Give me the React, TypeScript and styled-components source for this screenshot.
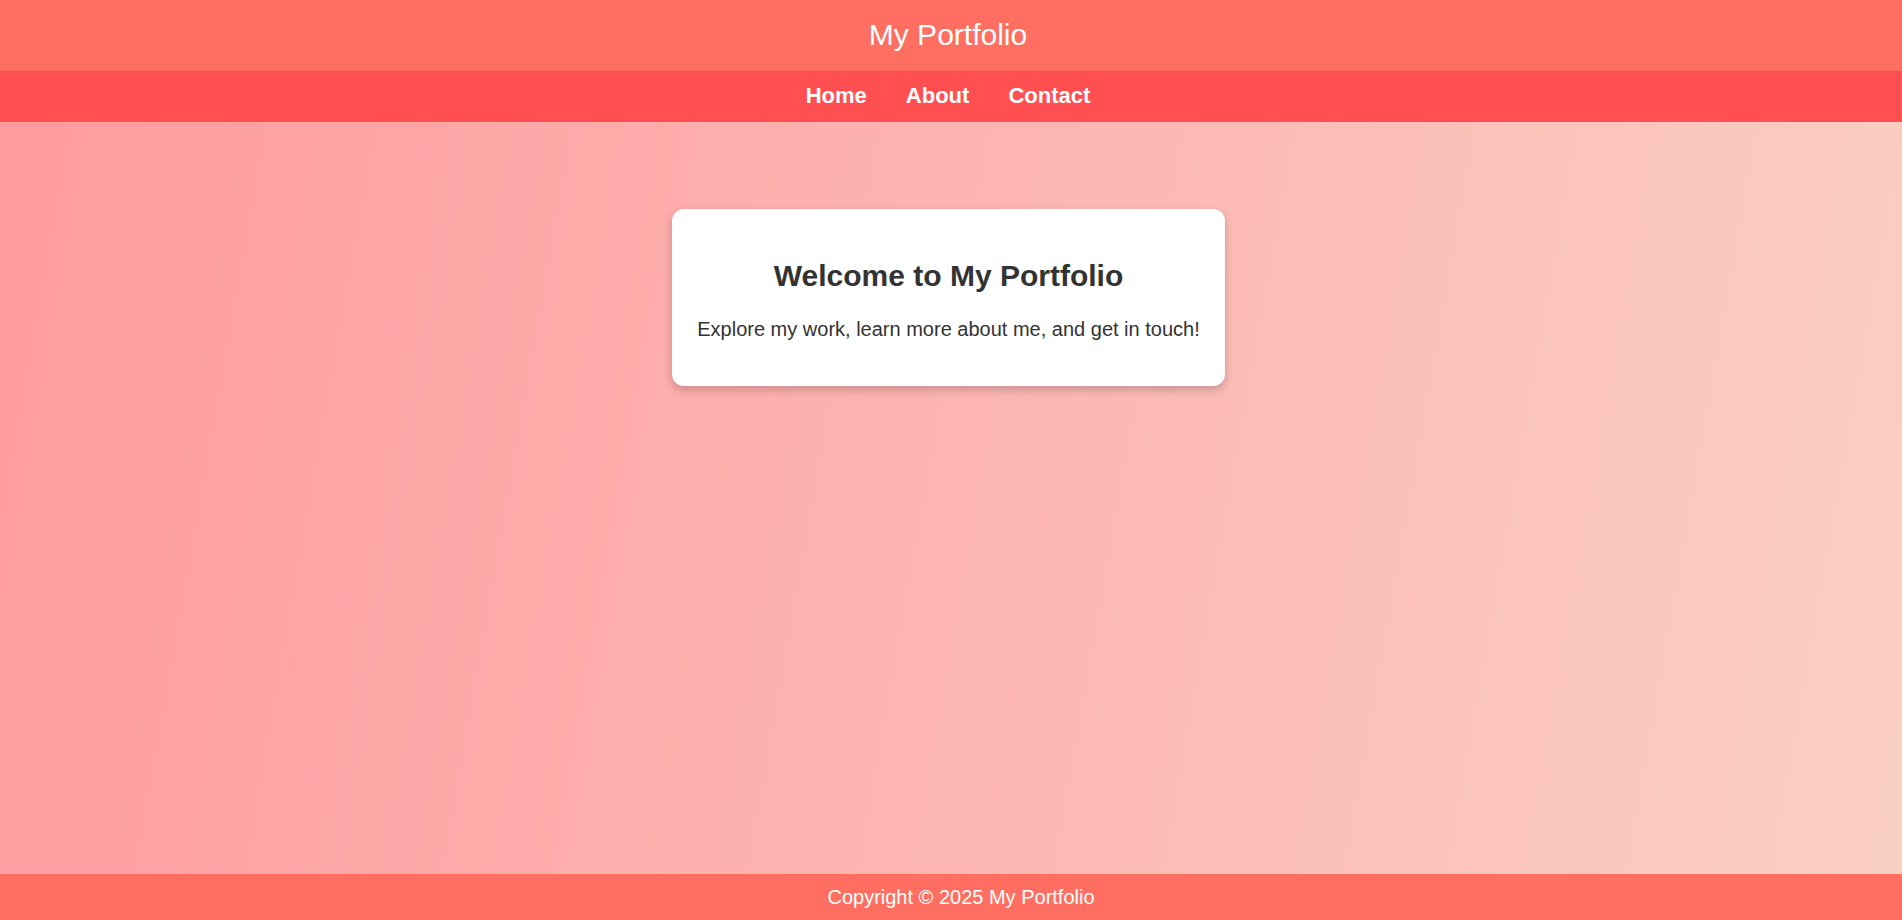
import React from "react";
import styled, { createGlobalStyle } from "styled-components";

const GlobalStyle = createGlobalStyle`
  html, body {
    margin: 0;
    padding: 0;
  }
  body {
    font-family: "Liberation Sans", Arial, sans-serif;
    background: linear-gradient(100deg, #ff9a9e 0%, #fad0c4 100%);
    min-height: 100vh;
  }
  * { box-sizing: border-box; }
`;

const Page = styled.div`
  min-height: 100vh;
  display: flex;
  flex-direction: column;
`;

const Header = styled.header`
  height: 71px;
  background: #ff6f61;
  display: flex;
  align-items: center;
  justify-content: center;
  padding: 0 6px 2px 0;
`;

const Title = styled.h1`
  margin: 0;
  color: #ffffff;
  font-size: 30px;
  font-weight: 400;
  line-height: 1;
`;

const Nav = styled.nav`
  height: 51px;
  background: #ff4f51;
  display: flex;
  align-items: center;
  justify-content: center;
  gap: 39px;
  padding: 0 6px 2px 0;
`;

const NavLink = styled.a`
  color: #ffffff;
  font-size: 22px;
  font-weight: 700;
  text-decoration: none;
  cursor: pointer;
`;

const Main = styled.main`
  flex: 1;
  display: flex;
  justify-content: center;
  align-items: flex-start;
  padding-top: 87px;
`;

const Card = styled.section`
  background: #ffffff;
  border-radius: 12px;
  box-shadow: 0 4px 10px rgba(0, 0, 0, 0.2);
  padding: 50px 25px 45px;
  text-align: center;
  color: #333333;
  margin-right: 5px;
`;

const CardTitle = styled.h2`
  margin: 0 0 25px;
  font-size: 30px;
  font-weight: 700;
`;

const CardText = styled.p`
  margin: 0;
  font-size: 20px;
`;

const Footer = styled.footer`
  height: 46px;
  background: #ff6f61;
  color: #ffffff;
  font-size: 20px;
  display: flex;
  align-items: center;
  justify-content: center;
  padding-left: 20px;
`;

export default function App() {
  return (
    <>
      <GlobalStyle />
      <Page>
        <Header>
          <Title>My Portfolio</Title>
        </Header>
        <Nav>
          <NavLink>Home</NavLink>
          <NavLink>About</NavLink>
          <NavLink>Contact</NavLink>
        </Nav>
        <Main>
          <Card>
            <CardTitle>Welcome to My Portfolio</CardTitle>
            <CardText>Explore my work, learn more about me, and get in touch!</CardText>
          </Card>
        </Main>
        <Footer>Copyright © 2025 My Portfolio</Footer>
      </Page>
    </>
  );
}
